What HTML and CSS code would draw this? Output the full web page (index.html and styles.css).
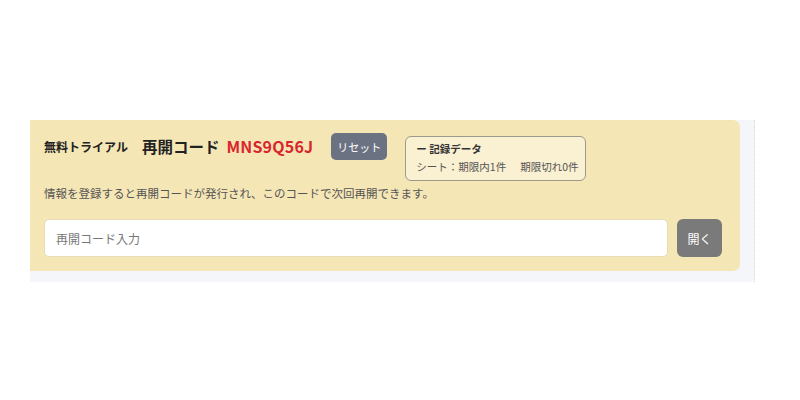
FILE: index.html
```html
<!DOCTYPE html>
<html lang="ja">
<head>
    <meta charset="UTF-8">
    <meta name="viewport" content="width=device-width, initial-scale=1.0">
    <title>無料トライアル</title>
    <link rel="stylesheet" href="styles.css">
</head>
<body>

    <div class="page">
        <div class="frame">
            <section class="trial">
                <div class="trial-head">
                    <span class="trial-label">無料トライアル</span>
                    <span class="code-label">再開コード</span>
                    <span class="code-value">MNS9Q56J</span>
                    <button class="reset-button" type="button">リセット</button>
                    <div class="record">
                        <div class="record-title">ー 記録データ</div>
                        <div class="record-body">シート：期限内1件<span class="record-gap">期限切れ0件</span></div>
                    </div>
                </div>
                <p class="trial-note">情報を登録すると再開コードが発行され、このコードで次回再開できます。</p>
                <form class="open-form">
                    <input type="text" class="code-input" placeholder="再開コード入力">
                    <button type="submit" class="open-button">開く</button>
                </form>
            </section>
        </div>
    </div>

</body>
</html>
```

FILE: styles.css
```css
body {
    margin: 0;
    font-family: "Noto Sans CJK JP", "Noto Sans", sans-serif;
    background: #ffffff;
    color: #222;
}
.page {
    padding: 120px 0 0 30px;
}
.frame {
    width: 710px;
    padding: 0 14px 11px 0;
    background: #f5f6fa;
    border-right: 1px dotted #d8d8d8;
}
.trial {
    background: #f5e6b6;
    border-radius: 0 7px 7px 0;
    padding: 13px 18px 14px 14px;
}
.trial-head {
    display: flex;
    align-items: flex-start;
}
.trial-label {
    font-size: 12px;
    font-weight: 700;
    line-height: 27px;
    margin-right: 14px;
}
.code-label {
    font-size: 15.5px;
    font-weight: 700;
    line-height: 27px;
    color: #222;
    margin-right: 7px;
}
.code-value {
    font-size: 16px;
    font-weight: 700;
    line-height: 27px;
    color: #d9262c;
    letter-spacing: 0.2px;
}
.reset-button {
    margin-left: 18px;
    width: 56px;
    height: 27px;
    padding: 0;
    border: none;
    border-radius: 5px;
    background: #6b7282;
    color: #fff;
    font-family: inherit;
    font-size: 11px;
}
.record {
    margin: 3px 0 0 18px;
    width: 169px;
    padding: 3px 0 4px 10px;
    background: #faf0d2;
    border: 1px solid #9c9a8c;
    border-radius: 6px;
}
.record-title {
    font-size: 10.5px;
    font-weight: 700;
    line-height: 18px;
    color: #333;
}
.record-body {
    font-size: 10.5px;
    line-height: 18px;
    color: #555;
    white-space: nowrap;
}
.record-gap {
    margin-left: 14px;
}
.trial-note {
    margin: 3px 0 0;
    font-size: 11.5px;
    line-height: 18px;
    color: #555;
}
.open-form {
    display: flex;
    gap: 9px;
    margin-top: 17px;
}
.code-input {
    flex: 1;
    height: 38px;
    box-sizing: border-box;
    padding: 0 11px;
    border: 1px solid #e6dcb8;
    border-radius: 5px;
    background: #fff;
    font-family: inherit;
    font-size: 12px;
    outline: none;
}
.code-input::placeholder {
    color: #777;
}
.open-button {
    width: 45px;
    height: 38px;
    padding: 0;
    border: none;
    border-radius: 6px;
    background: #7a7a7a;
    color: #fff;
    font-family: inherit;
    font-size: 12px;
}
```
